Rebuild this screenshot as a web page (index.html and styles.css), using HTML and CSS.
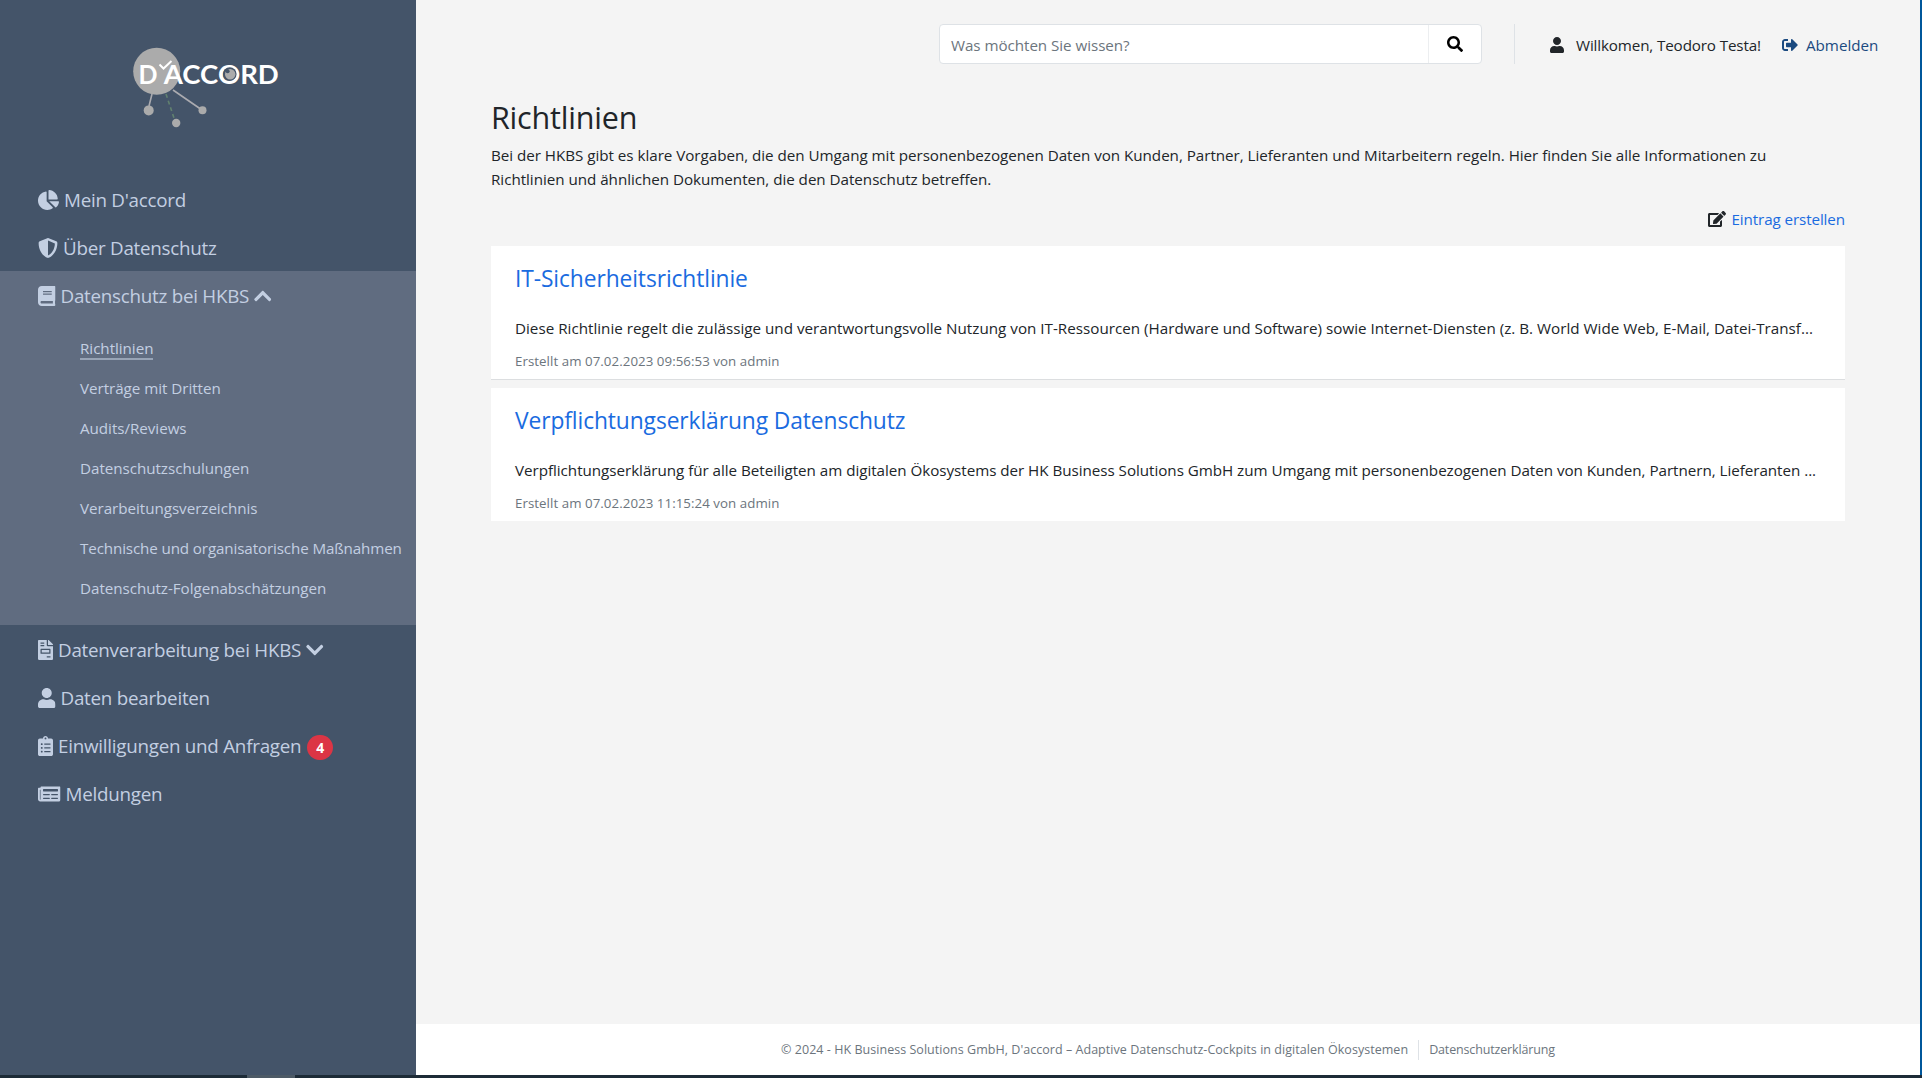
FILE: index.html
```html
<!DOCTYPE html>
<html lang="de">
<head>
<meta charset="utf-8">
<title>Richtlinien</title>
<link rel="stylesheet" href="styles.css">
</head>
<body>
<svg class="sprite" aria-hidden="true">
  <symbol id="pie" viewBox="0 0 544 512"><path d="M527.79 288H290.5l158.03 158.03c6.04 6.04 15.98 6.53 22.19.68 38.7-36.46 65.32-85.61 73.13-140.86 1.34-9.46-6.51-17.85-16.06-17.85zm-15.83-64.8C503.72 103.74 408.26 8.28 288.8.04 279.68-.59 272 7.1 272 16.24V240h223.77c9.14 0 16.82-7.68 16.19-16.8zM224 288V50.71c0-9.55-8.39-17.4-17.84-16.06C86.99 51.49-4.1 155.6.14 280.37 4.5 408.51 114.83 513.59 243.03 511.98c50.4-.63 96.97-16.87 135.26-44.03 7.9-5.6 8.42-17.23 1.57-24.08L224 288z"/></symbol>
  <symbol id="shield" viewBox="0 0 512 512"><path d="M466.5 83.7l-192-80a48.15 48.15 0 0 0-36.9 0l-192 80C27.7 91.1 16 108.6 16 128c0 198.5 114.5 335.7 221.5 380.3 11.8 4.9 25.1 4.9 36.9 0C360.1 472.6 496 349.3 496 128c0-19.4-11.7-36.9-29.5-44.3zM256.1 446.3l-.1-381 175.9 73.3c-3.3 151.4-82.1 261.1-175.8 307.7z"/></symbol>
  <symbol id="book" viewBox="0 0 448 512"><path d="M448 360V24c0-13.3-10.7-24-24-24H96C43 0 0 43 0 96v320c0 53 43 96 96 96h328c13.3 0 24-10.7 24-24v-16c0-7.5-3.5-14.3-8.9-18.7-4.2-15.4-4.2-59.3 0-74.7 5.4-4.3 8.9-11.1 8.9-18.6zM128 134c0-3.3 2.7-6 6-6h212c3.3 0 6 2.7 6 6v20c0 3.3-2.7 6-6 6H134c-3.3 0-6-2.7-6-6v-20zm0 64c0-3.3 2.7-6 6-6h212c3.3 0 6 2.7 6 6v20c0 3.3-2.7 6-6 6H134c-3.3 0-6-2.7-6-6v-20zm253.4 250H96c-17.7 0-32-14.3-32-32 0-17.6 14.4-32 32-32h285.4c-1.9 17.1-1.9 46.9 0 64z"/></symbol>
  <symbol id="chevron" viewBox="0 0 448 512"><path d="M207.029 381.476L12.686 187.132c-9.373-9.373-9.373-24.569 0-33.941l22.667-22.667c9.357-9.357 24.522-9.375 33.901-.04L224 284.505l154.745-154.021c9.379-9.335 24.544-9.317 33.901.04l22.667 22.667c9.373 9.373 9.373 24.569 0 33.941L240.971 381.476c-9.373 9.372-24.569 9.372-33.942 0z"/></symbol>
  <symbol id="invoice" viewBox="0 0 384 512"><path d="M288 256H96v64h192v-64zm89-151L279.1 7c-4.5-4.5-10.6-7-17-7H256v128h128v-6.1c0-6.3-2.5-12.4-7-16.9zm-153 31V0H24C10.7 0 0 10.7 0 24v464c0 13.3 10.7 24 24 24h336c13.3 0 24-10.7 24-24V160H248c-13.2 0-24-10.8-24-24zM64 72c0-4.42 3.58-8 8-8h80c4.42 0 8 3.58 8 8v16c0 4.42-3.58 8-8 8H72c-4.42 0-8-3.58-8-8V72zm0 64c0-4.42 3.58-8 8-8h80c4.42 0 8 3.58 8 8v16c0 4.42-3.58 8-8 8H72c-4.42 0-8-3.58-8-8v-16zm256 304c0 4.42-3.58 8-8 8h-80c-4.42 0-8-3.58-8-8v-16c0-4.42 3.58-8 8-8h80c4.42 0 8 3.58 8 8v16zm0-200v96c0 8.84-7.16 16-16 16H80c-8.84 0-16-7.16-16-16v-96c0-8.84 7.16-16 16-16h224c8.84 0 16 7.16 16 16z"/></symbol>
  <symbol id="user" viewBox="0 0 448 512"><path d="M224 256c70.7 0 128-57.3 128-128S294.7 0 224 0 96 57.3 96 128s57.3 128 128 128zm89.6 32h-16.7c-22.2 10.2-46.9 16-72.9 16s-50.6-5.8-72.9-16h-16.7C60.2 288 0 348.2 0 422.4V464c0 26.5 21.5 48 48 48h352c26.5 0 48-21.5 48-48v-41.6c0-74.2-60.2-134.4-134.4-134.4z"/></symbol>
  <symbol id="clipboard" viewBox="0 0 384 512"><path d="M336 64h-80c0-35.3-28.7-64-64-64s-64 28.7-64 64H48C21.5 64 0 85.5 0 112v352c0 26.5 21.5 48 48 48h288c26.5 0 48-21.5 48-48V112c0-26.5-21.5-48-48-48zM96 424c-13.3 0-24-10.7-24-24s10.7-24 24-24 24 10.7 24 24-10.7 24-24 24zm0-96c-13.3 0-24-10.7-24-24s10.7-24 24-24 24 10.7 24 24-10.7 24-24 24zm0-96c-13.3 0-24-10.7-24-24s10.7-24 24-24 24 10.7 24 24-10.7 24-24 24zm96-192c13.3 0 24 10.7 24 24s-10.7 24-24 24-24-10.7-24-24 10.7-24 24-24zm128 368c0 4.4-3.6 8-8 8H168c-4.4 0-8-3.6-8-8v-16c0-4.4 3.6-8 8-8h144c4.4 0 8 3.6 8 8v16zm0-96c0 4.4-3.6 8-8 8H168c-4.4 0-8-3.6-8-8v-16c0-4.4 3.6-8 8-8h144c4.4 0 8 3.6 8 8v16zm0-96c0 4.4-3.6 8-8 8H168c-4.4 0-8-3.6-8-8v-16c0-4.4 3.6-8 8-8h144c4.4 0 8 3.6 8 8v16z"/></symbol>
  <symbol id="news" viewBox="0 0 576 512"><path fill-rule="evenodd" d="M552 64H88c-13.3 0-24 10.7-24 24v8H24c-13.3 0-24 10.7-24 24v272c0 30.9 25.1 56 56 56h472c26.5 0 48-21.5 48-48V88c0-13.3-10.7-24-24-24zM56 400a8 8 0 0 1-8-8V144h16v248a8 8 0 0 1-8 8zM140 352h152q12 0 12 12v8q0 12-12 12H140q-12 0-12-12v-8q0-12 12-12zM348 352h152q12 0 12 12v8q0 12-12 12H348q-12 0-12-12v-8q0-12 12-12zM140 256h152q12 0 12 12v8q0 12-12 12H140q-12 0-12-12v-8q0-12 12-12zM348 256h152q12 0 12 12v8q0 12-12 12H348q-12 0-12-12v-8q0-12 12-12zM140 128h360q12 0 12 12v40q0 12-12 12H140q-12 0-12-12v-40q0-12 12-12z"/></symbol>
  <symbol id="search" viewBox="0 0 512 512"><path d="M505 442.7L405.3 343c-4.5-4.5-10.6-7-17-7H372c27.6-35.3 44-79.7 44-128C416 93.1 322.900 0 208 0S0 93.1 0 208s93.1 208 208 208c48.3 0 92.7-16.4 128-44v16.3c0 6.4 2.5 12.5 7 17l99.7 99.7c9.4 9.4 24.6 9.4 33.9 0l28.3-28.3c9.4-9.4 9.4-24.6.1-34zM208 336c-70.7 0-128-57.2-128-128 0-70.7 57.2-128 128-128 70.7 0 128 57.2 128 128 0 70.7-57.2 128-128 128z"/></symbol>
  <symbol id="edit" viewBox="0 0 576 512"><path d="M402.6 83.2l90.2 90.2c3.8 3.8 3.8 10 0 13.8L274.4 405.6l-92.8 10.3c-12.4 1.4-22.9-9.1-21.5-21.5l10.3-92.8L388.8 83.2c3.8-3.8 10-3.8 13.8 0zm162-22.9l-48.8-48.8c-15.2-15.2-39.9-15.2-55.2 0l-35.4 35.4c-3.8 3.8-3.8 10 0 13.8l90.2 90.2c3.8 3.8 10 3.8 13.8 0l35.4-35.4c15.2-15.3 15.2-40 0-55.2zM384 346.2V448H64V128h229.8c3.2 0 6.2-1.3 8.5-3.5l40-40c7.6-7.6 2.2-20.5-8.5-20.5H48C21.5 64 0 85.5 0 112v352c0 26.5 21.5 48 48 48h352c26.5 0 48-21.5 48-48V306.2c0-10.7-12.9-16-20.5-8.5l-40 40c-2.2 2.3-3.5 5.3-3.5 8.5z"/></symbol>
  <symbol id="logout" viewBox="0 0 512 512"><path d="M497 273L329 441c-15 15-41 4.5-41-17v-96H152c-13.3 0-24-10.7-24-24v-96c0-13.3 10.7-24 24-24h136V88c0-21.4 25.9-32 41-17l168 168c9.3 9.4 9.3 24.6 0 34zM192 436v-40c0-6.6-5.4-12-12-12H96c-17.7 0-32-14.3-32-32V160c0-17.7 14.3-32 32-32h84c6.6 0 12-5.4 12-12V76c0-6.6-5.4-12-12-12H96c-53 0-96 43-96 96v192c0 53 43 96 96 96h84c6.6 0 12-5.4 12-12z"/></symbol>
</svg>

<div class="window">
  <aside class="sidebar">
    <a class="logo" href="#">
      <svg width="150" height="86" viewBox="0 0 150 86" role="img" aria-label="D'accord">
        <circle class="node" cx="26.7" cy="27.3" r="23.5"/>
        <path class="edge" d="M22 50 19 62M43 46 72 66"/>
        <path class="edge edge-dashed" d="M36 50 45 77"/>
        <circle class="node" cx="18.7" cy="66.4" r="5"/>
        <circle class="node" cx="72.5" cy="66.2" r="4"/>
        <circle class="node" cx="46.2" cy="79" r="4.2"/>
        <text class="logo-text" x="8.600" y="39.800" textLength="19" lengthAdjust="spacingAndGlyphs">D</text>
        <text class="logo-text" x="33.800" y="39.800" textLength="115" lengthAdjust="spacingAndGlyphs">ACCORD</text>
        <path class="tick" d="M29.500 20.500 33.500 24.500 41.500 17"/>
        <circle class="eye" cx="99.8" cy="30" r="6.8"/>
        <circle class="node" cx="100.2" cy="30.200" r="5.200"/>
        <circle class="eye" cx="97.6" cy="27.200" r="2"/>
      </svg>
    </a>
    <nav class="nav">
      <a class="nav-item" href="#"><svg class="icon w-pie"><use href="#pie"/></svg><span>Mein D'accord</span></a>
      <a class="nav-item" href="#"><svg class="icon w-512"><use href="#shield"/></svg><span>Über Datenschutz</span></a>
      <div class="nav-group">
        <a class="nav-item" href="#"><svg class="icon w-448"><use href="#book"/></svg><span>Datenschutz bei HKBS</span><svg class="icon w-448 up"><use href="#chevron"/></svg></a>
        <ul class="subnav">
          <li><a class="current" href="#">Richtlinien</a></li>
          <li><a href="#">Verträge mit Dritten</a></li>
          <li><a href="#">Audits/Reviews</a></li>
          <li><a href="#">Datenschutzschulungen</a></li>
          <li><a href="#">Verarbeitungsverzeichnis</a></li>
          <li><a class="long" href="#">Technische und organisatorische Maßnahmen</a></li>
          <li><a href="#">Datenschutz-Folgenabschätzungen</a></li>
        </ul>
      </div>
      <a class="nav-item" href="#"><svg class="icon w-384"><use href="#invoice"/></svg><span>Datenverarbeitung bei HKBS</span><svg class="icon w-448"><use href="#chevron"/></svg></a>
      <a class="nav-item" href="#"><svg class="icon w-448"><use href="#user"/></svg><span>Daten bearbeiten</span></a>
      <a class="nav-item" href="#"><svg class="icon w-384"><use href="#clipboard"/></svg><span>Einwilligungen und Anfragen</span><b class="badge">4</b></a>
      <a class="nav-item" href="#"><svg class="icon w-576"><use href="#news"/></svg><span>Meldungen</span></a>
    </nav>
  </aside>

  <div class="page">
    <header class="topbar">
      <form class="search">
        <span class="search-field">Was möchten Sie wissen?</span>
        <button class="search-button" type="button" aria-label="Suchen"><svg class="icon-sm w-16"><use href="#search"/></svg></button>
      </form>
      <div class="account">
        <svg class="icon-sm w-14"><use href="#user"/></svg>
        <span class="welcome">Willkomen, Teodoro Testa!</span>
        <a class="logout" href="#"><svg class="icon-sm w-16"><use href="#logout"/></svg><span>Abmelden</span></a>
      </div>
    </header>
    <main class="content">
      <h1 class="title">Richtlinien</h1>
      <p class="intro">Bei der HKBS gibt es klare Vorgaben, die den Umgang mit personenbezogenen Daten von Kunden, Partner, Lieferanten und Mitarbeitern regeln. Hier finden Sie alle Informationen zu<br>Richtlinien und ähnlichen Dokumenten, die den Datenschutz betreffen.</p>
      <div class="actions"><svg class="icon-sm w-18"><use href="#edit"/></svg><a href="#">Eintrag erstellen</a></div>
      <article class="card">
        <h2><a href="#">IT-Sicherheitsrichtlinie</a></h2>
        <p class="excerpt">Diese Richtlinie regelt die zulässige und verantwortungsvolle Nutzung von IT-Ressourcen (Hardware und Software) sowie Internet-Diensten (z. B. World Wide Web, E-Mail, Datei-Transf...</p>
        <p class="meta">Erstellt am 07.02.2023 09:56:53 von admin</p>
      </article>
      <article class="card">
        <h2><a href="#">Verpflichtungserklärung Datenschutz</a></h2>
        <p class="excerpt">Verpflichtungserklärung für alle Beteiligten am digitalen Ökosystems der HK Business Solutions GmbH zum Umgang mit personenbezogenen Daten von Kunden, Partnern, Lieferanten ...</p>
        <p class="meta">Erstellt am 07.02.2023 11:15:24 von admin</p>
      </article>
    </main>
    <footer class="footer">
      <span class="copyright">© 2024 - HK Business Solutions GmbH, D'accord – Adaptive Datenschutz-Cockpits in digitalen Ökosystemen</span>
      <a class="privacy" href="#">Datenschutzerklärung</a>
    </footer>
  </div>
</div>
<div class="taskbar"><span class="taskbar-item"></span></div>
</body>
</html>
```
FILE: styles.css
```css
* { box-sizing: border-box; }
body {
  margin: 0;
  height: 1078px;
  overflow: hidden;
  display: flex;
  flex-direction: column;
  background: #f4f4f4;
  color: #212529;
  font: 15.2px/24px "Open Sans", "Noto Sans", sans-serif;
}
a { color: #1a6be0; text-decoration: none; }
h1, h2, p, ul { margin: 0; padding: 0; font-weight: 400; }
.sprite { display: none; }
svg { fill: currentColor; flex: none; }

.window { flex: 1; min-height: 0; display: flex; border-right: 2px solid #00579b; }

.sidebar { width: 416px; flex: none; background: #445469; }
.logo { display: block; height: 175px; padding: 44px 0 0 130px; }
.logo svg { display: block; }
.node { fill: #ababab; }
.edge { fill: none; stroke: #ababb0; stroke-width: 1.6; }
.edge-dashed { stroke: #61816f; stroke-dasharray: 4 3; }
.logo-text { font: 700 27px Lato, sans-serif; fill: #fff; }
.tick { fill: none; stroke: #fff; stroke-width: 2; }
.eye { fill: #445469; }

.nav-item {
  display: flex;
  align-items: center;
  gap: 5px;
  height: 48px;
  padding: 2px 0 0 38px;
  color: #c3cfe2;
  font-size: 18.8px;
  letter-spacing: -0.25px;
  white-space: nowrap;
}
.nav-group { height: 354px; background: #606c80; }
.icon { height: 20px; }
.w-pie { width: 21px; }
.w-576 { width: 22.5px; }
.w-512 { width: 20px; }
.w-448 { width: 17.5px; }
.w-384 { width: 15px; }
.up { transform: rotate(180deg); }
.badge {
  width: 26px;
  height: 25px;
  margin: 2px 0 0 1px;
  border-radius: 13px;
  background: #dc3545;
  color: #fff;
  font-size: 14px;
  line-height: 25px;
  letter-spacing: 0;
  text-align: center;
}
.subnav { list-style: none; padding: 9px 0 0 80px; }
.subnav li { height: 40px; line-height: 40px; white-space: nowrap; }
.subnav a { color: #c3cfe2; letter-spacing: -0.04px; }
.subnav .long { letter-spacing: -0.13px; }
.subnav .current { border-bottom: 2px solid #98a4b6; }

.page { flex: 1; min-width: 0; display: flex; flex-direction: column; }
.topbar { display: flex; height: 64px; padding-top: 24px; justify-content: flex-end; }
.search {
  display: flex;
  width: 543px;
  height: 40px;
  border: 1px solid #dee2e6;
  border-radius: 4px;
  background: #fff;
  margin-right: 32px;
}
.search-field { flex: 1; padding-left: 11px; line-height: 40px; letter-spacing: -0.05px; color: #6c757d; }
.search-button {
  width: 53px;
  padding: 0;
  border: 0;
  border-left: 1px solid #eceef0;
  background: none;
  color: #000;
  display: grid;
  place-items: center;
}
.icon-sm { height: 16px; }
.w-14 { width: 14px; }
.w-16 { width: 16px; }
.w-18 { width: 18px; }
.account { display: flex; align-items: center; width: 406px; padding-left: 35px; padding-top: 2px; border-left: 1px solid #dee2e6; }
.welcome { margin: 0 21px 0 12px; letter-spacing: -0.13px; }
.logout { display: flex; align-items: center; gap: 8px; color: #1b4a80; }

.content { flex: 1; min-height: 0; padding: 32px 75px 0; }
.title { font-size: 30.5px; line-height: 42px; letter-spacing: -0.2px; }
.intro { margin-top: 5px; letter-spacing: -0.03px; white-space: nowrap; }
.actions { display: flex; justify-content: flex-end; align-items: center; gap: 5px; height: 24px; margin: 16px 0 15px; letter-spacing: -0.1px; }
.card { height: 134px; margin-bottom: 8px; padding: 16px 24px 0; background: #fff; border-bottom: 1px solid #dcdee0; }
.card:last-child { height: 133px; border-bottom: 0; }
.card h2 { font-size: 22.8px; line-height: 34px; letter-spacing: -0.1px; }
.excerpt { margin-top: 20px; letter-spacing: 0.01px; white-space: nowrap; }
.card:last-child .excerpt { letter-spacing: -0.035px; }
.meta { margin-top: 9px; color: #6c757d; font-size: 13.3px; letter-spacing: 0.05px; }

.footer { flex: none; height: 51px; padding-top: 1px; display: flex; justify-content: center; align-items: center; background: #fff; color: #6c757d; font-size: 12.5px; line-height: 20px; }
.copyright { padding-right: 10px; border-right: 1px solid #dee2e6; letter-spacing: 0.04px; }
.privacy { padding-left: 10px; color: #6c757d; letter-spacing: -0.15px; }

.taskbar { flex: none; height: 3px; padding-left: 247px; background: #1d2b37; }
.taskbar-item { display: block; width: 48px; height: 3px; background: #4d5a66; }
```
